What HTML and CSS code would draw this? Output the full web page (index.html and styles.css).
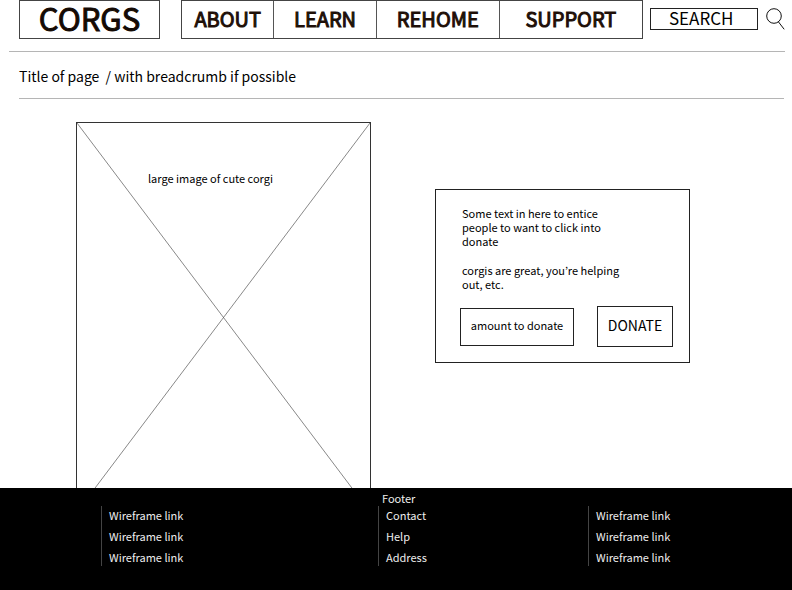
FILE: index.html
```html
<!DOCTYPE html>
<html lang="en">
<head>
  <meta charset="utf-8">
  <meta name="viewport" content="width=device-width, initial-scale=1">
  <title>CORGS</title>
  <link rel="stylesheet" href="styles.css">
</head>
<body>
  <header class="header">
    <a class="logo" href="#">CORGS</a>
    <nav class="nav">
      <a href="#">ABOUT</a>
      <a href="#">LEARN</a>
      <a href="#">REHOME</a>
      <a href="#">SUPPORT</a>
    </nav>
    <form class="search">
      <input class="search-input" type="text" placeholder="SEARCH" aria-label="Search">
      <button class="search-button" type="button" aria-label="Search">
        <svg viewBox="0 0 19 22" width="19" height="22" fill="none" stroke="#111">
          <circle cx="8" cy="8" r="7.3"/>
          <path d="M12.4 13.8 18.2 21.3"/>
        </svg>
      </button>
    </form>
  </header>

  <div class="breadcrumb">Title of page&nbsp; / with breadcrumb if possible</div>

  <main class="main">
    <figure class="picture">
      <svg class="cross" viewBox="0 0 293 389" preserveAspectRatio="none" stroke="#555" stroke-width="0.7" aria-hidden="true">
        <path d="M0 0 293 389M293 0 0 389"/>
      </svg>
      <figcaption>large image of cute corgi</figcaption>
    </figure>
    <section class="card">
      <div class="card-text">
        <p>Some text in here to entice people to want to click into donate</p>
        <p>corgis are great, you’re helping out, etc.</p>
      </div>
      <form class="donate">
        <input class="amount" type="text" placeholder="amount to donate" aria-label="Amount to donate">
        <button class="donate-button" type="button">DONATE</button>
      </form>
    </section>
  </main>

  <footer class="footer">
    <div class="footer-title">Footer</div>
    <ul class="links">
      <li><a href="#">Wireframe link</a></li>
      <li><a href="#">Wireframe link</a></li>
      <li><a href="#">Wireframe link</a></li>
    </ul>
    <ul class="links">
      <li><a href="#">Contact</a></li>
      <li><a href="#">Help</a></li>
      <li><a href="#">Address</a></li>
    </ul>
    <ul class="links">
      <li><a href="#">Wireframe link</a></li>
      <li><a href="#">Wireframe link</a></li>
      <li><a href="#">Wireframe link</a></li>
    </ul>
  </footer>
</body>
</html>
```
FILE: styles.css
```css
* {
  box-sizing: border-box;
}

body {
  display: flex;
  flex-direction: column;
  height: 100vh;
  margin: 0;
  background: #fff;
  color: #000;
  font-family: "Noto Sans CJK KR", "Noto Sans", sans-serif;
  font-size: 11px;
  line-height: 14px;
}

a {
  color: inherit;
  text-decoration: none;
}

input,
button {
  margin: 0;
  padding: 0 0 4px;
  border: 1px solid #222;
  border-radius: 0;
  background: #fff;
  color: #000;
  font: inherit;
}

input::placeholder {
  color: #000;
  opacity: 1;
}

.header {
  display: flex;
  align-items: flex-start;
  margin: 0 7px 0 9px;
  padding: 0 0 12px 10px;
  border-bottom: 1px solid #b5b5b5;
}

.logo {
  flex: 140;
  margin-right: 21px;
  padding-bottom: 4px;
  border: 1px solid #444;
  color: #140a04;
  font-size: 31px;
  line-height: 33px;
  text-align: center;
  -webkit-text-stroke: 1px #140a04;
}

.nav {
  display: grid;
  flex: 463;
  grid-template-columns: 92fr 103fr 124fr 144fr;
  border: 1px solid #444;
  color: #1e0f07;
  font-size: 20px;
  line-height: 35px;
  text-align: center;
  -webkit-text-stroke: 1px #1e0f07;
}

.nav a {
  padding-bottom: 2px;
}

.nav a + a {
  border-left: 1px solid #555;
}

.search {
  display: flex;
  flex: 136;
  gap: 8px;
  min-width: 0;
  margin: 8px 0 0 7px;
}

.search-input {
  flex: 1;
  min-width: 0;
  height: 22px;
  padding: 0 18px 4px;
  font-size: 17px;
}

.search-button {
  width: 19px;
  height: 22px;
  padding: 0;
  border: 0;
}

.search-button svg {
  display: block;
}

.breadcrumb {
  margin: 0 8px 0 19px;
  padding: 14px 0 12px;
  border-bottom: 1px solid #b5b5b5;
  font-size: 14px;
  line-height: 20px;
}

.main {
  display: grid;
  flex: 1;
  grid-template-columns: 295fr 255fr;
  align-items: start;
  gap: 64px;
  min-height: 0;
  padding: 23px 102px 0 76px;
  overflow: hidden;
}

.picture {
  position: relative;
  aspect-ratio: 295 / 391;
  margin: 0;
  padding: 48px 0 0 71px;
  border: 1px solid #333;
}

.cross {
  position: absolute;
  inset: 0;
  width: 100%;
  height: 100%;
}

.card {
  margin-top: 67px;
  padding: 16px 16px 15px 24px;
  border: 1px solid #222;
}

.card-text {
  max-width: 164px;
  padding-left: 2px;
}

.card-text p {
  margin: 0 0 15px;
}

.donate {
  display: flex;
  align-items: center;
  gap: 23px;
}

.amount {
  flex: 115;
  min-width: 0;
  height: 38px;
  text-align: center;
}

.donate-button {
  flex: 76;
  height: 41px;
  font-size: 14px;
}

.footer {
  display: grid;
  grid-template-columns: 277fr 210fr 204fr;
  padding: 3px 0 24px 101px;
  background: #000;
  color: #eee;
}

.footer-title {
  grid-column: 2 / 4;
  padding-left: 4px;
  line-height: 15px;
}

.links {
  display: flex;
  flex-direction: column;
  gap: 7px;
  margin: 0;
  padding: 2px 0 2px 7px;
  border-left: 1px solid #444;
  list-style: none;
}
```
